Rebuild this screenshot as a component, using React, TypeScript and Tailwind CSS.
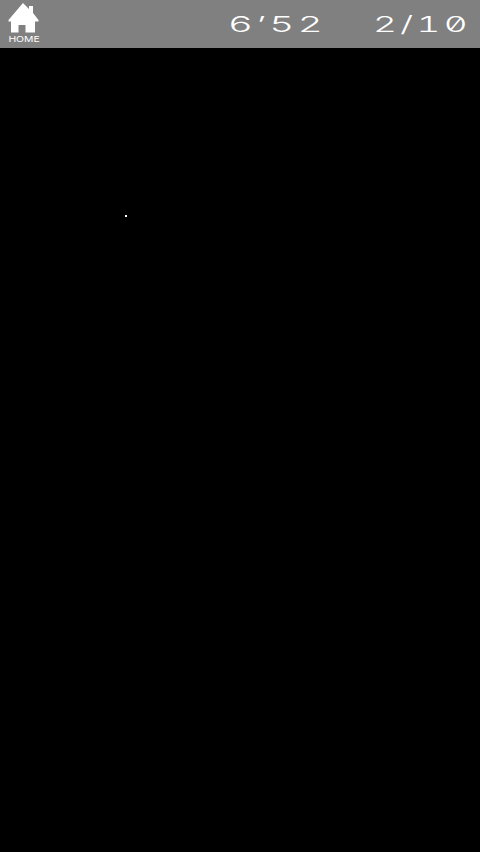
export default function App() {
  return (
    <div className="relative h-[852px] w-[480px] overflow-hidden bg-black">
      {/* top bar */}
      <header className="flex h-12 items-center bg-[#808080] pl-2 text-white [font-family:Inter,sans-serif]">
        <div className="flex w-8 flex-col items-center self-start pt-[3px]">
          <svg width="32" height="30" viewBox="0 0 32 30" className="shrink-0">
            <path
              d="M15 0 L21 6 V3 H25 V10 L30.5 17 V18.5 H27 V29.5 H17.5 V22 H10.5 V29.5 H3 V18.5 H0.5 V17 Z"
              fill="#fff"
            />
          </svg>
          <span className="mt-[2px] origin-center scale-x-[1.3] text-[8px] leading-[8px] font-normal whitespace-nowrap">
            HOME
          </span>
        </div>
        <span className="ml-[188px] w-[145px] origin-left scale-x-[1.75] text-[22px] leading-none font-light tracking-[2px] whitespace-nowrap [font-feature-settings:'tnum']">
          6&#8217;52
        </span>
        <span className="w-[105px] origin-left scale-x-[1.68] text-[22px] leading-none font-light tracking-[2px] whitespace-nowrap [font-feature-settings:'zero','tnum']">
          2/10
        </span>
      </header>
      {/* stray point on the canvas */}
      <div className="absolute top-[215px] left-[125px] h-[2px] w-[2px] bg-white" />
    </div>
  );
}
